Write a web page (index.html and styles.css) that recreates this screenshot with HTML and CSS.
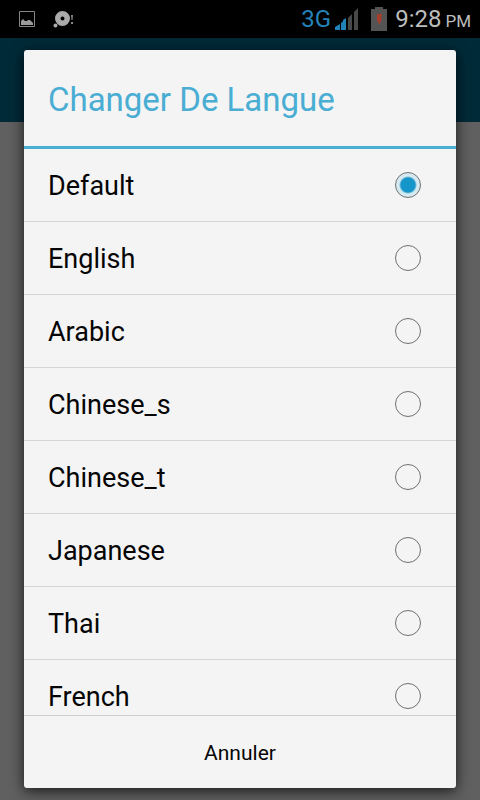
FILE: index.html
```html
<!DOCTYPE html>
<html lang="fr">
<head>
<meta charset="utf-8">
<meta name="viewport" content="width=device-width, initial-scale=1">
<title>Changer De Langue</title>
<link rel="stylesheet" href="styles.css">
</head>
<body>
<header class="status">
  <div class="notices">
    <svg width="16" height="16" viewBox="0 0 16 16" aria-hidden="true">
      <path d="M.5.5h15v15H.5z" fill="none" stroke="#858585"/>
      <path d="M2 14v-4l1-1 1-1 1 1 1 1h2l1-1h2l1 1 1 1 1 1v2z" fill="#999"/>
    </svg>
    <svg width="22" height="18" viewBox="0 0 22 18" aria-hidden="true">
      <path fill="#aaa" fill-rule="evenodd" d="M9.500 1a7.500 7.500 0 1 1 0 15 7.500 7.500 0 0 1 0-15zm0 5.500a2 2 0 1 0 0 4 2 2 0 0 0 0-4z"/>
      <circle cx="2.500" cy="15.500" r="2" fill="#aaa"/>
      <path d="M18 5h2l-.5 5h-1zM18 12h2v2h-2z" fill="#888"/>
    </svg>
  </div>
  <div class="system">
    <span class="network">3G</span>
    <svg class="signal" width="24" height="23" viewBox="0 0 24 23" aria-hidden="true">
      <path d="M0 22v-3l5-3v6zM6 22v-7l5-4v11z" fill="#2383b8"/>
      <path d="M8 22V12l3-2v12z" fill="#2383b8"/>
      <path d="M13 22V10l4-4v16zM19 22V4l4-4v22z" fill="#484848"/>
    </svg>
    <svg class="battery" width="16" height="24" viewBox="0 0 16 24" aria-hidden="true">
      <path d="M4 0h8v2h4v22H0V2h4z" fill="#545454"/>
      <path d="M6 7h5l-1 5h1l-3 6-1-4H6z" fill="#a63d2b"/>
    </svg>
    <span class="clock">9:28 <span class="period">PM</span></span>
  </div>
</header>
<div class="screen">
  <div class="appbar"></div>
</div>
<form class="dialog" role="dialog" aria-labelledby="title">
  <h1 class="title" id="title">Changer De Langue</h1>
  <div class="list" role="radiogroup" aria-labelledby="title">
    <label class="option"><span>Default</span><input type="radio" name="lang" checked></label>
    <label class="option"><span>English</span><input type="radio" name="lang"></label>
    <label class="option"><span>Arabic</span><input type="radio" name="lang"></label>
    <label class="option"><span>Chinese_s</span><input type="radio" name="lang"></label>
    <label class="option"><span>Chinese_t</span><input type="radio" name="lang"></label>
    <label class="option"><span>Japanese</span><input type="radio" name="lang"></label>
    <label class="option"><span>Thai</span><input type="radio" name="lang"></label>
    <label class="option"><span>French</span><input type="radio" name="lang"></label>
  </div>
  <button class="cancel" type="button">Annuler</button>
</form>
</body>
</html>
```

FILE: styles.css
```css
* {
  box-sizing: border-box;
}

body {
  margin: 0;
  height: 100vh;
  display: flex;
  flex-direction: column;
  overflow: hidden;
  background: #606060;
  font-family: Roboto, "Liberation Sans", sans-serif;
}

.status {
  flex: none;
  height: 38px;
  padding: 0 9px 0 19px;
  display: flex;
  justify-content: space-between;
  align-items: center;
  background: #000;
}

.notices {
  display: flex;
  align-items: center;
  gap: 18px;
}

.system {
  display: flex;
  align-items: center;
  color: #bdbdbd;
  line-height: 38px;
}

.network {
  margin-right: 4px;
  color: #2383b8;
  font-size: 24px;
}

.signal {
  margin-right: 12px;
}

.battery {
  margin-right: 8px;
}

.clock {
  padding-top: 2px;
  font-size: 24px;
}

.period {
  margin-left: -2px;
  font-size: 17px;
}

.screen {
  flex: 1;
}

.appbar {
  height: 84px;
  background: #002a38;
}

.dialog {
  position: absolute;
  inset: 50px 24px 12px;
  display: flex;
  flex-direction: column;
  border-radius: 3px;
  background: #f4f4f4;
  box-shadow: 0 3px 14px rgba(0, 0, 0, 0.75);
  overflow: hidden;
}

.title {
  flex: none;
  margin: 0;
  padding: 4px 24px 0;
  border-bottom: 3px solid #4aadd3;
  color: #4aadd3;
  font-size: 33px;
  font-weight: 400;
  line-height: 92px;
}

.list {
  flex: 1;
  min-height: 0;
  overflow: hidden;
}

.option {
  display: flex;
  align-items: center;
  justify-content: space-between;
  height: 73px;
  padding: 0 35px 0 24px;
  border-bottom: 1px solid #d6d6d6;
  color: #050505;
  font-size: 27px;
}

.option span {
  padding-top: 2px;
}

.option input {
  appearance: none;
  width: 26px;
  height: 26px;
  margin: 0;
  border: 1px solid #707070;
  border-radius: 50%;
}

.option input:checked {
  background: radial-gradient(circle, #1596cb 7px, #7fbfd9 8px, #d5eaf1 9px);
}

.cancel {
  flex: none;
  height: 73px;
  padding: 2px 0 0;
  border: 0;
  border-top: 1px solid #d0d0d0;
  background: none;
  color: #050505;
  font-family: inherit;
  font-size: 21px;
}
```
